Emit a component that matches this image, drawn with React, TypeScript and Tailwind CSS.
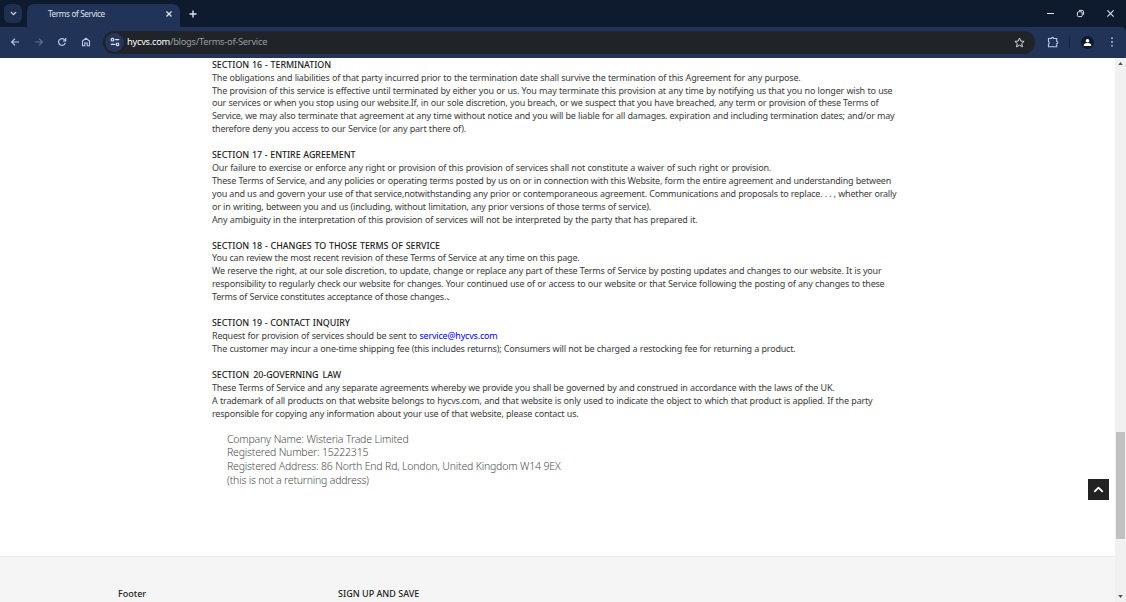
import { ChevronDown, ChevronUp } from 'lucide-react'

const sections = [
  {
    title: 'SECTION 16 - TERMINATION',
    width: 119,
    lines: [
      { text: 'The obligations and liabilities of that party incurred prior to the termination date shall survive the termination of this Agreement for any purpose.', width: 588.5 },
      { text: 'The provision of this service is effective until terminated by either you or us. You may terminate this provision at any time by notifying us that you no longer wish to use', width: 680.5 },
      { text: 'our services or when you stop using our website.If, in our sole discretion, you breach, or we suspect that you have breached, any term or provision of these Terms of', width: 666.5 },
      { text: 'Service, we may also terminate that agreement at any time without notice and you will be liable for all damages. expiration and including termination dates; and/or may', width: 682.5 },
      { text: 'therefore deny you access to our Service (or any part there of).', width: 254 },
    ],
  },
  {
    title: 'SECTION 17 - ENTIRE AGREEMENT',
    width: 143.5,
    lines: [
      { text: 'Our failure to exercise or enforce any right or provision of this provision of services shall not constitute a waiver of such right or provision.', width: 559 },
      { text: 'These Terms of Service, and any policies or operating terms posted by us on or in connection with this Website, form the entire agreement and understanding between', width: 679 },
      { text: 'you and us and govern your use of that service,notwithstanding any prior or contemporaneous agreement. Communications and proposals to replace. . . , whether orally', width: 684.5 },
      { text: 'or in writing, between you and us (including, without limitation, any prior versions of those terms of service).', width: 439 },
      { text: 'Any ambiguity in the interpretation of this provision of services will not be interpreted by the party that has prepared it.', width: 485.5 },
    ],
  },
  {
    title: 'SECTION 18 - CHANGES TO THOSE TERMS OF SERVICE',
    width: 228,
    lines: [
      { text: 'You can review the most recent revision of these Terms of Service at any time on this page.', width: 367.5 },
      { text: 'We reserve the right, at our sole discretion, to update, change or replace any part of these Terms of Service by posting updates and changes to our website. It is your', width: 669.5 },
      { text: 'responsibility to regularly check our website for changes. Your continued use of or access to our website or that Service following the posting of any changes to these', width: 672.5 },
      { text: 'Terms of Service constitutes acceptance of those changes.、', width: 243 },
    ],
  },
  {
    title: 'SECTION 19 - CONTACT INQUIRY',
    width: 138,
    lines: [
      { text: 'Request for provision of services should be sent to', link: 'service@hycvs.com', width: 285.5 },
      { text: 'The customer may incur a one-time shipping fee (this includes returns); Consumers will not be charged a restocking fee for returning a product.', width: 583.5 },
    ],
  },
  {
    title: 'SECTION 20-GOVERNING LAW',
    width: 129,
    lines: [
      { text: 'These Terms of Service and any separate agreements whereby we provide you shall be governed by and construed in accordance with the laws of the UK.', width: 622.5 },
      { text: 'A trademark of all products on that website belongs to hycvs.com, and that website is only used to indicate the object to which that product is applied. If the party', width: 660.5 },
      { text: 'responsible for copying any information about your use of that website, please contact us.', width: 366.5 },
    ],
  },
]

const company = [
  { text: 'Company Name: Wisteria Trade Limited', width: 181.5 },
  { text: 'Registered Number: 15222315', width: 139.5 },
  { text: 'Registered Address: 86 North End Rd, London, United Kingdom W14 9EX', width: 333.5 },
  { text: '(this is not a returning address)', width: 141.5 },
]

function Line({ text, width, link }: { text: string; width: number; link?: string }) {
  return (
    <p className="whitespace-nowrap [text-align-last:justify]" style={{ width }}>
      {text}
      {link && <> <a href={`mailto:${link}`} className="text-[#0000ee]">{link}</a></>}
    </p>
  )
}

function TabStrip() {
  return (
    <div className="flex h-[27px] bg-[#0e1a2e] text-[#dde3ee]">
      <button className="mt-[4px] ml-[4px] flex h-[19px] w-[18px] items-center justify-center rounded-[6px] bg-[#1f2f50]">
        <ChevronDown size={9} strokeWidth={3.2} />
      </button>
      <div className="mt-[4px] ml-[5px] flex h-[23px] w-[153px] items-center rounded-t-[7px] bg-[#223358] pr-[7px] pl-[21px]">
        <span className="w-[57px] pb-[2px] text-[8.2px] tracking-[-0.38px] whitespace-nowrap">Terms of Service</span>
        <svg viewBox="0 0 8 8" className="mb-[3px] ml-auto h-[8px] w-[8px]" fill="none" stroke="currentColor" strokeWidth="1.3">
          <path d="M1.5 1.5l5 5M6.5 1.5l-5 5" />
        </svg>
      </div>
      <svg viewBox="0 0 10 10" className="mt-[9px] ml-[8px] h-[10px] w-[10px]" fill="none" stroke="currentColor" strokeWidth="1.4">
        <path d="M5 1.5v7M1.5 5h7" />
      </svg>
      <div className="mt-[9px] mr-[11px] ml-auto flex gap-[21px]">
        <svg viewBox="0 0 9 9" className="h-[9px] w-[9px]" fill="none" stroke="currentColor" strokeWidth="1">
          <path d="M1 4.5h7" />
        </svg>
        <svg viewBox="0 0 9 9" className="h-[9px] w-[9px]" fill="none" stroke="currentColor" strokeWidth="1">
          <rect x="1.4" y="2.8" width="4.8" height="4.8" rx="1" />
          <path d="M3 1.4h3.1a1.5 1.5 0 0 1 1.5 1.5v3" />
        </svg>
        <svg viewBox="0 0 9 9" className="h-[9px] w-[9px]" fill="none" stroke="currentColor" strokeWidth="1.1">
          <path d="M1.4 1.4l6.2 6.2M7.6 1.4L1.4 7.6" />
        </svg>
      </div>
    </div>
  )
}

function Toolbar() {
  return (
    <div className="flex h-[31px] items-center rounded-tr-[5px] bg-[#223358] pb-px text-[#b9c9ee]">
      <svg viewBox="0 0 10 10" className="ml-[10px] h-[10px] w-[10px]" fill="none" stroke="currentColor" strokeWidth="1.2">
        <path d="M9 5H1.7M5 1.6L1.6 5 5 8.4" />
      </svg>
      <svg viewBox="0 0 10 10" className="ml-[14px] h-[10px] w-[10px] text-[#5f7199]" fill="none" stroke="currentColor" strokeWidth="1.1">
        <path d="M1 5h7.3M5 1.6L8.4 5 5 8.4" />
      </svg>
      <svg viewBox="0 0 10 10" className="ml-[13px] h-[10px] w-[10px]" fill="none" stroke="currentColor" strokeWidth="1.2">
        <path d="M8.3 5.8A3.4 3.4 0 1 1 7.6 2.8L8.6 3.8" />
        <path d="M8.7 1v3H5.8" />
      </svg>
      <svg viewBox="0 0 10 10" className="ml-[14px] h-[10px] w-[10px]" fill="none" stroke="currentColor" strokeWidth="1.1">
        <path d="M1.5 4L5 1.3 8.5 4v4.8H6.2V6H3.8v2.8H1.5z" />
      </svg>
      <div className="ml-[12px] flex h-[23px] w-[932px] items-center rounded-full bg-[#202327] pr-[10px] pl-[2px]">
        <span className="flex h-[19px] w-[19px] items-center justify-center rounded-full bg-[#27355a]">
          <svg viewBox="0 0 10 10" className="h-[10px] w-[10px] text-[#dce5fa]" fill="none" stroke="currentColor" strokeWidth="1.2">
            <circle cx="2.5" cy="2.7" r="1.3" />
            <path d="M5 2.7h4.2M.8 7.3H5" />
            <circle cx="7.5" cy="7.3" r="1.3" />
          </svg>
        </span>
        <span className="ml-[3px] text-[9.3px] tracking-[-0.27px] whitespace-nowrap text-[#9a9da1]">
          <span className="text-white">hycvs.com</span>/blogs/Terms-of-Service
        </span>
        <svg viewBox="0 0 10 10" className="ml-auto h-[11px] w-[11px] text-[#d7dbe3]" fill="none" stroke="currentColor" strokeWidth=".9">
          <path d="M5 .9l1.2 2.8 3 .3L7 6l.7 3L5 7.4 2.3 9 3 6 .8 4l3-.3z" />
        </svg>
      </div>
      <svg viewBox="0 0 12 12" className="ml-[12px] h-[12px] w-[12px]" fill="none" stroke="currentColor" strokeWidth="1.1">
        <path d="M1.5 2.5h3a1.1 1.1 0 0 1 2.2 0h3v3a1.1 1.1 0 0 1 0 2.2v3H1.5V8a1.5 1.5 0 0 0 0-2.6z" />
      </svg>
      <span className="ml-[10px] h-[11px] w-px bg-[#16264b]" />
      <span className="ml-[11px] flex h-[13px] w-[13px] items-center justify-center rounded-full bg-[#0e1a2e]">
        <svg viewBox="0 0 9 9" className="h-[9px] w-[9px] text-white" fill="currentColor">
          <circle cx="4.5" cy="2.7" r="1.8" />
          <path d="M.8 8V7C.8 5.5 3 5 4.5 5s3.7.5 3.7 2v1z" />
        </svg>
      </span>
      <svg viewBox="0 0 4 12" className="ml-[16px] h-[12px] w-[4px]" fill="currentColor">
        <circle cx="2" cy="2.2" r=".9" />
        <circle cx="2" cy="6" r=".9" />
        <circle cx="2" cy="9.8" r=".9" />
      </svg>
    </div>
  )
}

function Scrollbar() {
  return (
    <div className="flex w-[11px] flex-col items-center bg-[#f1f1f1]">
      <svg viewBox="0 0 6 4" className="mt-[4px] h-[3px] w-[5px]" fill="#505050">
        <path d="M0 4l3-4 3 4z" />
      </svg>
      <div className="mt-[367px] h-[107px] w-[9px] bg-[#c1c1c1]" />
      <svg viewBox="0 0 6 4" className="mt-auto mb-[4px] h-[3px] w-[5px]" fill="#505050">
        <path d="M0 0l3 4 3-4z" />
      </svg>
    </div>
  )
}

export default function App() {
  return (
    <div className="flex h-[602px] w-[1126px] flex-col overflow-hidden bg-white font-['Noto_Sans','Noto_Sans_CJK_SC',sans-serif]">
      <div className="bg-[#0e1a2e]">
        <TabStrip />
        <Toolbar />
      </div>
      <div className="flex min-h-0 flex-1">
        <main className="relative flex w-[1115px] flex-col">
          <article className="ml-[212px] flex flex-col gap-[12.92px] pt-[0.7px] text-[9px] leading-[12.92px] tracking-[-0.2px] text-[#3c3c3c]">
            {sections.map((section) => (
              <section key={section.title}>
                <h2 className="text-[8.9px] font-medium tracking-[-0.04px] whitespace-nowrap text-[#1c1c1c] [text-align-last:justify]" style={{ width: section.width }}>
                  {section.title}
                </h2>
                {section.lines.map((line) => (
                  <Line key={line.text} {...line} />
                ))}
              </section>
            ))}
          </article>
          <address className="mt-[12.3px] ml-[227px] text-[10.5px] leading-[13.7px] font-light tracking-[-0.2px] text-[#4c4c4c] not-italic">
            {company.map((line) => (
              <Line key={line.text} {...line} />
            ))}
          </address>
          <footer className="mt-auto flex h-[46px] border-t border-[#ececec] bg-[#f5f5f5] pt-[30px] text-[9px] leading-[13px] font-medium whitespace-nowrap text-[#222]">
            <span className="ml-[118px] w-[220px]">Footer</span>
            <span>SIGN UP AND SAVE</span>
          </footer>
          <button className="absolute top-[421px] right-[6px] flex h-[21px] w-[21px] items-center justify-center bg-[#222] text-white">
            <ChevronUp size={15} strokeWidth={3} />
          </button>
        </main>
        <Scrollbar />
      </div>
    </div>
  )
}
